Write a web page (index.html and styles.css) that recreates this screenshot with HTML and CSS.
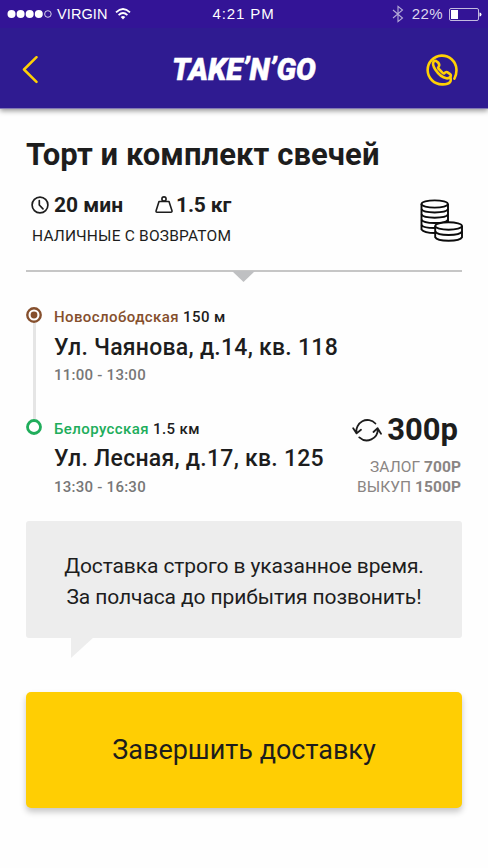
FILE: index.html
```html
<!DOCTYPE html>
<html lang="ru">
<head>
<meta charset="utf-8">
<title>Take'n'Go</title>
<link rel="stylesheet" href="styles.css">
</head>
<body>
<header class="header">
  <div class="status">
    <div class="status-left">
      <svg width="45" height="10" viewBox="0 0 45 10" fill="#fff"><circle cx="4.5" cy="5" r="4"/><circle cx="13.6" cy="5" r="4"/><circle cx="22.7" cy="5" r="4"/><circle cx="31.8" cy="5" r="4"/><circle cx="40.9" cy="5" r="3.3" fill="none" stroke="#fff" stroke-width=".8"/></svg>
      <span class="carrier">VIRGIN</span>
      <svg width="16" height="12" viewBox="0 0 16 12" fill="none" stroke="#fff" stroke-width="1.8"><path d="M1 4.3Q8-2.2 15 4.3M3.6 7.1Q8 3 12.4 7.1"/><path d="M5.7 9.1Q8 7 10.3 9.1L8 11.6z" fill="#fff" stroke="none"/></svg>
    </div>
    <span class="clock">4:21 PM</span>
    <div class="status-right">
      <svg width="12" height="18" viewBox="0 0 12 18" fill="none" stroke="#b5abd8" stroke-width="1.1"><path d="M1 5l9.5 8L6 16.7V1.3L10.5 5 1 13"/></svg>
      <span class="percent">22%</span>
      <svg width="33" height="13" viewBox="0 0 33 13"><rect x=".5" y=".5" width="29" height="12" rx="1.5" fill="none" stroke="#c3bbdf"/><rect x="2" y="2" width="7" height="9" fill="#fff"/><path d="M30.5 4.5q2 0 2 2t-2 2z" fill="#fff"/></svg>
    </div>
  </div>
  <div class="nav">
    <svg class="back" width="17" height="28" viewBox="0 0 17 28" fill="none" stroke="#ffd004" stroke-width="2.5" stroke-linecap="round" stroke-linejoin="round"><path d="M14.5 1.2L2 13.5 14.5 25.8"/></svg>
    <span class="logo">TAKE’N’GO</span>
    <svg class="call" width="32" height="32" viewBox="0 0 32 32" fill="none" stroke="#ffd004" stroke-width="2.6" stroke-linecap="round" stroke-linejoin="round"><path d="M28.4 24.6Q30.8 20.6 30.4 15A14.4 14.4 0 1 0 16 30.4Q22 30.6 24 28.2Q25.3 26.6 24.4 23.4"/><path d="M12.2 8.6L10 7Q8.4 6.2 7.4 8C6.4 10 7.4 12.6 9.3 15.5C12 19.6 16.6 23.6 20.4 24.3Q23 24.6 24.5 22.6Q25.4 20.9 23.8 19.8L21.2 18.2Q19.8 17.6 18.4 19.2Q17.7 19.8 16.4 18.6L12.4 14.5Q11.6 13.6 12.7 12.6Q14 11 12.2 8.6Z"/></svg>
  </div>
</header>
<main class="content">
  <h1 class="title">Торт и комплект свечей</h1>
  <section class="summary">
    <div class="facts">
      <div class="metrics">
        <svg width="18" height="18" viewBox="0 0 18 18" fill="none" stroke="#1d1d1d" stroke-width="1.7" stroke-linecap="round"><circle cx="9" cy="9" r="7.9"/><path d="M8.3 4.6V9l3.7 3.8"/></svg>
        <span class="metric duration">20 мин</span>
        <svg width="18" height="18" viewBox="0 0 18 18" fill="none" stroke="#1d1d1d" stroke-width="1.6" stroke-linejoin="round"><path d="M4 5.5H14L17 14.8Q17.1 16.3 16 16.3H2Q.8 16.3 1.1 14.8Z"/><circle cx="9" cy="3" r="2.1"/></svg>
        <span class="metric weight">1.5 кг</span>
      </div>
      <p class="payment">НАЛИЧНЫЕ С ВОЗВРАТОМ</p>
    </div>
    <svg class="coins" width="43" height="43" viewBox="0 0 43 43" fill="#fff" stroke="#0c0c0c" stroke-width="1.9"><path d="M1.5 5V30.5Q4 34 15 34T28 30.5V5"/><path d="M1.5 10.2Q3 13.5 14.7 13.5T28 10.2M1.5 15.4Q3 18.7 14.7 18.7T28 15.4M1.5 20.6Q3 24 14.7 24T28 20.6M1.5 25.8Q3 29 14.7 29T28 25.8" fill="none"/><ellipse cx="14.7" cy="5" rx="13.2" ry="3.6"/><path d="M15.2 27V38.3Q17 41.7 28.6 41.7T42 38.3V27"/><path d="M15.2 32.5Q17 36 28.6 36T42 32.5" fill="none"/><ellipse cx="28.6" cy="27" rx="13.4" ry="3.7"/></svg>
  </section>
  <div class="divider"></div>
  <section class="route">
    <div class="track">
      <svg width="16" height="16" viewBox="0 0 16 16" fill="none" stroke="#854f2d"><circle cx="8" cy="8" r="6.7" stroke-width="2.4"/><circle cx="8" cy="8" r="3.4" fill="#854f2d" stroke="none"/></svg>
      <span class="line"></span>
      <svg width="16" height="16" viewBox="0 0 16 16" fill="none" stroke="#20ad5b"><circle cx="8" cy="8" r="6.5" stroke-width="2.8"/></svg>
    </div>
    <div class="stops">
      <div class="stop">
        <p class="station"><span class="brown">Новослободская</span> 150 м</p>
        <p class="address first">Ул. Чаянова, д.14, кв. 118</p>
        <p class="time">11:00 - 13:00</p>
      </div>
      <div class="stop">
        <p class="station"><span class="green">Белорусская</span> 1.5 км</p>
        <p class="address">Ул. Лесная, д.17, кв. 125</p>
        <p class="time">13:30 - 16:30</p>
      </div>
    </div>
    <div class="price">
      <div class="sum">
        <svg width="30" height="24" viewBox="0 0 30 24" fill="none" stroke="#1d1d1d" stroke-width="1.8" stroke-linecap="round" stroke-linejoin="round"><path d="M23.4 5.5A11 11 0 0 0 4.6 15.2M1.2 10.3L4.6 15.4 9 11.8M7.3 19.4A11 11 0 0 0 25.8 11M21.5 14L25.6 10.2 29 15.7"/></svg>
        <span class="amount">300р</span>
      </div>
      <p class="terms">ЗАЛОГ <b>700Р</b></p>
      <p class="terms">ВЫКУП <b>1500Р</b></p>
    </div>
  </section>
  <div class="note">
    <p class="note-one">Доставка строго в указанное время.</p>
    <p class="note-two">За полчаса до прибытия позвонить!</p>
  </div>
  <button class="finish" type="button">Завершить доставку</button>
</main>
</body>
</html>
```
FILE: styles.css
```css
* { box-sizing: border-box; }
body { margin: 0; width: 488px; height: 868px; overflow: hidden; background: #fefefe; color: #1d1d1d; font-family: Roboto, sans-serif; }
p, h1 { margin: 0; white-space: nowrap; }
svg { display: block; flex: none; }
.header { height: 109px; background: #2f1b91; box-shadow: 0 2px 5px rgba(0,0,0,.4); color: #fff; border-bottom: 1px solid #8379b4; }
.status { height: 28px; background: #331496; display: grid; grid-template-columns: 1fr auto 1fr; align-items: center; padding: 0 6px 0 7px; font: 15px/28px "Liberation Sans", sans-serif; }
.status-left, .status-right { display: flex; align-items: center; }
.status-right { justify-content: flex-end; }
.carrier { margin: 0 7px 0 5px; letter-spacing: .1px; font-size: 14.5px; }
.clock { letter-spacing: .9px; margin-right: 2px; }
.percent { margin: 0 6px 0 8px; color: #ddd8ee; letter-spacing: .4px; }
.nav { height: 80px; display: flex; align-items: center; justify-content: space-between; padding: 4px 30px 0 22px; }
.logo { width: 150px; margin-left: 29px; font-size: 31.5px; line-height: 40px; font-weight: 900; font-style: italic; white-space: nowrap; -webkit-text-stroke: .5px #fff; transform: scaleX(.94); transform-origin: left; }
.content { padding: 26px 26px 0; }
.title { font-size: 31px; line-height: 40px; letter-spacing: .07px; font-weight: 700; }
.summary { display: flex; justify-content: space-between; margin-top: 16px; height: 79px; margin-right: -1px; }
.metrics { display: flex; align-items: center; padding-left: 5px; }
.metric { font-size: 21px; line-height: 28px; font-weight: 700; }
.duration { margin-left: 5px; width: 101px; }
.weight { margin-left: 3px; letter-spacing: -.15px; }
.payment { margin: 5px 0 0 6px; font-size: 15.5px; line-height: 24px; letter-spacing: .2px; }
.coins { margin-top: 8px; }
.divider { height: 2px; background: #c6c6c6; position: relative; }
.divider::after { content: ""; position: absolute; left: 206px; top: 1px; width: 23px; height: 11px; background: #bfc0c2; clip-path: polygon(0 0, 100% 0, 50% 100%); }
.route { display: flex; height: 214px; margin-top: 35px; }
.track { width: 16px; display: flex; flex-direction: column; align-items: center; }
.line { width: 3px; height: 96px; background: #e5e5e5; }
.stops { margin-left: 12px; display: flex; flex-direction: column; gap: 34px; flex: 1; width: 0; }
.station { font-size: 15px; line-height: 20px; font-weight: 500; letter-spacing: .4px; }
.brown { color: #854f2d; }
.green { color: #20ad5b; }
.address { font-size: 23px; line-height: 34px; margin: 3px 0 1px; font-weight: 500; letter-spacing: .26px; }
.address.first { margin: 4px 0 0; }
.time { font-size: 15px; line-height: 20px; color: #777; font-weight: 500; letter-spacing: .25px; }
.price { padding-top: 103px; display: flex; flex-direction: column; align-items: flex-end; }
.sum { display: flex; align-items: center; gap: 5px; margin-right: 4px; }
.amount { font-size: 31px; line-height: 40px; font-weight: 700; }
.terms { font-size: 15.5px; line-height: 20px; color: #8a8583; letter-spacing: .07px; margin-right: 1px; }
.terms:nth-child(2) { margin-top: 7px; }
.note { position: relative; height: 117px; padding-top: 30px; border-radius: 3px; background: #ededed; text-align: center; font-size: 21px; letter-spacing: -.1px; line-height: 31px; }
.note::after { content: ""; position: absolute; left: 45px; top: 116px; width: 23px; height: 21px; background: #ededed; clip-path: polygon(0 0, 100% 0, 0 100%); }
.finish { display: block; width: 100%; height: 116px; margin-top: 54px; border: 0; border-radius: 5px; background: #ffce03; box-shadow: 0 4px 6px rgba(0,0,0,.22); color: #1d1d1d; font: 27px Roboto, sans-serif; }
```
